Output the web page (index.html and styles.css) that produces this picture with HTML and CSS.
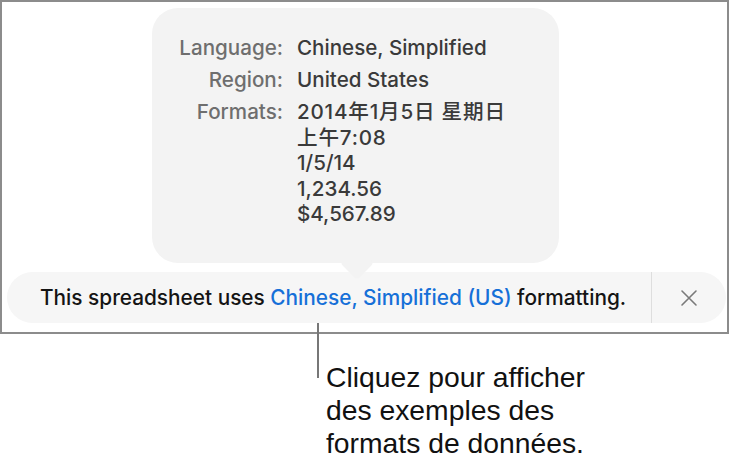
FILE: index.html
```html
<!DOCTYPE html>
<html lang="fr">
<head>
<meta charset="utf-8">
<link rel="stylesheet" href="styles.css">
</head>
<body>
<div class="frame">
  <div class="popover">
    <div class="grid">
      <div class="label">Language:</div>
      <div class="value">Chinese, Simplified</div>
      <div class="label">Region:</div>
      <div class="value">United States</div>
      <div class="label">Formats:</div>
      <div class="value lines">
        <div class="cjk">2014年1月5日 星期日</div>
        <div class="cjk">上午7:08</div>
        <div>1/5/14</div>
        <div>1,234.56</div>
        <div>$4,567.89</div>
      </div>
    </div>
  </div>
  <div class="banner">
    <div class="message">This spreadsheet uses <span class="link">Chinese, Simplified (US)</span> formatting.</div>
    <div class="close">
      <svg width="18" height="18" viewBox="0 0 18 18"><path d="M2 2 L16 16 M16 2 L2 16" stroke="#7a7a7a" stroke-width="1.6" stroke-linecap="round" fill="none"/></svg>
    </div>
  </div>
</div>
<div class="callout">
  <p class="note">Cliquez pour afficher<br>des exemples des<br>formats de données.</p>
</div>
</body>
</html>
```
FILE: styles.css
```css
html, body {
  margin: 0;
  padding: 0;
  background: #ffffff;
}
body {
  width: 729px;
  height: 465px;
  overflow: hidden;
  font-family: Inter, "Noto Sans CJK SC", sans-serif;
}
.frame {
  box-sizing: border-box;
  width: 729px;
  height: 334px;
  border: 2px solid #8c8c8c;
  padding-top: 6px;
  display: flex;
  flex-direction: column;
}
.popover {
  position: relative;
  z-index: 1;
  box-sizing: border-box;
  margin-left: 150px;
  width: 407px;
  height: 255px;
  background: #f3f3f3;
  border-radius: 26px;
  padding: 27px 0 0 20px;
}
.popover::after {
  content: "";
  position: absolute;
  left: 193px;
  bottom: -12px;
  width: 24px;
  height: 24px;
  background: #f3f3f3;
  border-radius: 4px;
  transform: rotate(45deg);
}
.grid {
  display: grid;
  grid-template-columns: 111px auto;
  column-gap: 14px;
  row-gap: 6.5px;
  font-size: 20.6px;
  font-weight: 500;
  line-height: 25.5px;
}
.label {
  text-align: right;
  color: #6e6e6e;
}
.value {
  color: #3a3a3a;
  white-space: nowrap;
}
.cjk {
  letter-spacing: 0.8px;
}
.banner {
  margin: 9px 1px 0 5px;
  height: 51px;
  background: #f6f6f6;
  border-radius: 26px;
  display: flex;
  align-items: stretch;
}
.message {
  flex: 1;
  display: flex;
  align-items: center;
  padding-left: 33px;
  font-size: 20.8px;
  font-weight: 500;
  color: #141414;
  white-space: pre;
}
.link {
  color: #1670d8;
}
.close {
  width: 74px;
  border-left: 1px solid #dedede;
  display: flex;
  align-items: center;
  justify-content: center;
}
.callout {
  position: relative;
  padding-left: 326px;
}
.callout::before {
  content: "";
  position: absolute;
  left: 317px;
  top: -11px;
  width: 2px;
  height: 55px;
  background: #777777;
}
.note {
  margin: 0;
  padding-top: 27px;
  font-family: "Liberation Sans", Arial, sans-serif;
  font-size: 28.3px;
  line-height: 33px;
  color: #111111;
}
```
